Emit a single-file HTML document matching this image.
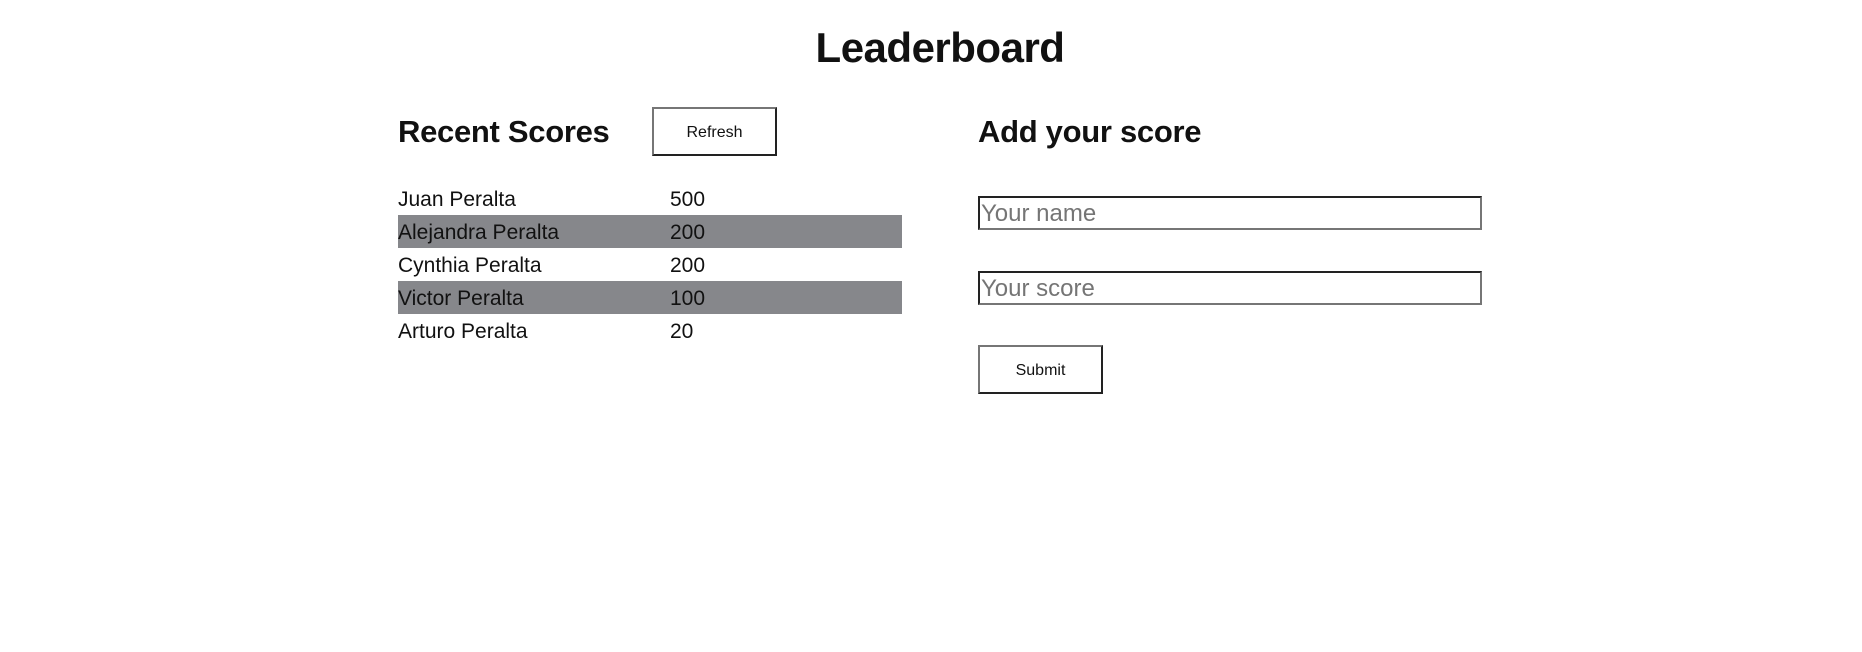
<!DOCTYPE html>
<html><head><style>
body{margin:0;width:1862px;height:652px;background:#fff;font-family:"Liberation Sans",Arial,sans-serif;color:#111;position:relative;overflow:hidden}
h1{position:absolute;margin:0;left:0;width:1880px;text-align:center;top:24px;font-size:42px;font-weight:bold;letter-spacing:-0.5px}
h2{position:absolute;margin:0;font-size:31px;font-weight:bold;top:114px;letter-spacing:-0.3px}
.btn{position:absolute;box-sizing:border-box;border:2px solid #222;border-top-color:#767676;border-left-color:#767676;background:#fff;font-size:16px;text-align:center;display:flex;align-items:center;justify-content:center;padding-top:2px}
.row{position:absolute;left:398px;width:504px;height:33px;font-size:21px;line-height:35px}
.row span{position:absolute;left:272px}
.g{background:#86878b}
.inp{position:absolute;left:978px;width:504px;height:34px;box-sizing:border-box;border:2px solid #222;border-bottom-color:#767676;border-right-color:#767676;font-size:24px;color:#757575;line-height:32px;padding-left:1px}
</style></head><body>
<h1>Leaderboard</h1>
<h2 style="left:398px">Recent Scores</h2>
<div class="btn" style="left:652px;top:107px;width:125px;height:49px">Refresh</div>
<div class="row" style="top:182px">Juan Peralta<span>500</span></div>
<div class="row g" style="top:215px">Alejandra Peralta<span>200</span></div>
<div class="row" style="top:248px">Cynthia Peralta<span>200</span></div>
<div class="row g" style="top:281px">Victor Peralta<span>100</span></div>
<div class="row" style="top:314px">Arturo Peralta<span>20</span></div>
<h2 style="left:978px">Add your score</h2>
<div class="inp" style="top:196px">Your name</div>
<div class="inp" style="top:271px">Your score</div>
<div class="btn" style="left:978px;top:345px;width:125px;height:49px">Submit</div>
</body></html>
